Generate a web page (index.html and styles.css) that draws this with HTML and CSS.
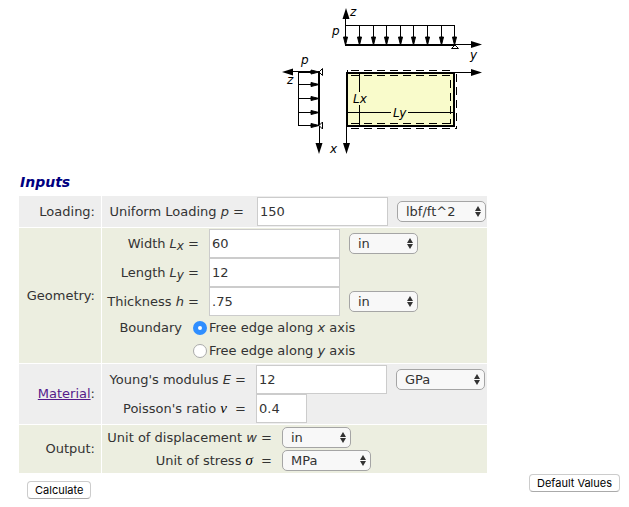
FILE: index.html
```html
<!DOCTYPE html>
<html lang="en">
<head>
<meta charset="utf-8">
<title>Plate calculator</title>
<link rel="stylesheet" href="styles.css">
</head>
<body>
<svg class="diagram" viewBox="280 0 210 164" width="210" height="164" role="img" aria-label="Plate under uniform load">
  <defs>
    <path id="axis-head" d="M0 0L-11 -3.5V3.5Z"/>
    <path id="load-head" d="M0 0L-8 -2V2Z" stroke="#000"/>
    <g id="load"><path class="line" d="M0 25V40"/><use href="#load-head" transform="translate(0 45) rotate(90)"/></g>
    <g id="side-load"><path class="line" d="M299 0H312"/><use href="#load-head" x="319"/></g>
  </defs>
  <path class="line" d="M345.500 12V45M346 25.500H455M455 44.500H474"/>
  <path class="thick" d="M345 45H455"/>
  <use href="#axis-head" transform="translate(346 8) rotate(-90)"/>
  <use href="#axis-head" x="482" y="44.500"/>
  <use href="#load" x="345.500"/><use href="#load" x="359.500"/><use href="#load" x="373.500"/>
  <use href="#load" x="386.500"/><use href="#load" x="400.500"/><use href="#load" x="413.500"/>
  <use href="#load" x="427.500"/><use href="#load" x="441.500"/><use href="#load" x="454.500"/>
  <path class="support" d="M455 45L451.500 48.500H458.500Z"/>
  <path class="line" d="M290 71.500H314M298.500 72V126M319.500 125V146"/>
  <path class="thick" d="M319 71V126"/>
  <use href="#axis-head" transform="translate(282 72) rotate(180)"/>
  <use href="#axis-head" transform="translate(319 154) rotate(90)"/>
  <use href="#side-load" y="72"/><use href="#side-load" y="84.500"/><use href="#side-load" y="98.500"/>
  <use href="#side-load" y="112.500"/><use href="#side-load" y="125.500"/>
  <path class="support" d="M319 72L322.500 68.500V75.500ZM319 125.500L322.500 122V129Z"/>
  <rect class="plate" x="347" y="73" width="107" height="53"/>
  <path class="line" d="M454 72.500H474M346.500 126V146M347.500 70V73M359.500 73V92M359.500 105V126M347 112.500H391M408 112.500H454"/>
  <path class="dash" d="M351 70.500H454M351 75.500H450M351 123.500H450M351 128.500H456M450.500 80V124M456.500 74V129"/>
  <use href="#axis-head" x="482" y="72.500"/>
  <use href="#axis-head" transform="translate(346.500 154) rotate(90)"/>
  <g class="caption">
    <text x="350" y="16">z</text><text x="332" y="35">p</text><text x="470" y="59">y</text>
    <text x="301" y="64">p</text><text x="287" y="84">z</text><text x="330" y="153">x</text>
    <text x="353" y="103">Lx</text><text x="393" y="117">Ly</text>
  </g>
</svg>

<h2 class="title">Inputs</h2>

<form class="calculator">
  <section class="group group-gray">
    <h3 class="group-name">Loading:</h3>
    <div class="fields fields-loading">
      <label class="name" for="load-value">Uniform Loading <i>p</i> =</label>
      <input class="box" id="load-value" type="text" value="150">
      <span class="pick"><select class="wide" aria-label="Loading unit"><option>lbf/ft^2</option></select></span>
    </div>
  </section>
  <section class="group group-green">
    <h3 class="group-name">Geometry:</h3>
    <div class="fields fields-geometry">
      <label class="name" for="width">Width <i>L<sub>x</sub></i> =</label>
      <input class="box" id="width" type="text" value="60">
      <span class="pick"><select aria-label="Width unit"><option>in</option></select></span>
      <label class="name" for="length">Length <i>L<sub>y</sub></i> =</label>
      <input class="box" id="length" type="text" value="12">
      <span></span>
      <label class="name" for="thickness">Thickness <i>h</i> =</label>
      <input class="box" id="thickness" type="text" value=".75">
      <span class="pick"><select aria-label="Thickness unit"><option>in</option></select></span>
      <div class="boundary" role="radiogroup" aria-labelledby="boundary-name">
        <span class="boundary-name" id="boundary-name">Boundary</span>
        <input type="radio" name="edge" id="edge-x" checked>
        <label for="edge-x">Free edge along <i>x</i> axis</label>
        <span></span>
        <input type="radio" name="edge" id="edge-y">
        <label for="edge-y">Free edge along <i>y</i> axis</label>
      </div>
    </div>
  </section>
  <section class="group group-gray">
    <h3 class="group-name"><a href="#material">Material</a>:</h3>
    <div class="fields fields-material">
      <label class="name" for="young">Young's modulus <i>E</i> =</label>
      <input class="box" id="young" type="text" value="12">
      <span class="pick"><select class="wide" aria-label="Modulus unit"><option>GPa</option></select></span>
      <label class="name" for="poisson">Poisson's ratio <i class="greek">ν</i> =</label>
      <input class="box box-short" id="poisson" type="text" value="0.4">
    </div>
  </section>
  <section class="group group-green">
    <h3 class="group-name">Output:</h3>
    <div class="fields fields-output">
      <label class="name" for="displacement">Unit of displacement <i>w</i> =</label>
      <span class="pick"><select id="displacement"><option>in</option></select></span>
      <label class="name" for="stress">Unit of stress <i class="greek">σ</i> =</label>
      <span class="pick"><select class="wide" id="stress"><option>MPa</option></select></span>
    </div>
  </section>
  <div class="actions">
    <button class="calculate" type="button">Calculate</button>
    <button type="reset">Default Values</button>
  </div>
</form>
</body>
</html>
```

FILE: styles.css
```css
* { box-sizing: border-box; }

body {
  margin: 0;
  background: #fff;
  color: #333;
  font: 13px/16px Verdana, "DejaVu Sans", sans-serif;
}

.diagram { display: block; margin-left: 280px; }
.line { fill: none; stroke: #000; stroke-width: 1; shape-rendering: crispEdges; }
.thick { fill: none; stroke: #000; stroke-width: 2; shape-rendering: crispEdges; }
.support { fill: #fff; stroke: #000; stroke-width: 1; }
.plate { fill: #f9fbcb; stroke: #000; stroke-width: 2; shape-rendering: crispEdges; }
.dash { fill: none; stroke: #000; stroke-dasharray: 8 5; shape-rendering: crispEdges; }
.caption { font: italic 12px "DejaVu Sans", sans-serif; fill: #000; }

.title {
  margin: 10px 0 6px 20px;
  color: #000080;
  font-size: 14px;
  font-style: italic;
  font-weight: bold;
  line-height: 16px;
}

.calculator { margin: 0; }

.group {
  display: grid;
  grid-template-columns: 82px 1fr;
  column-gap: 1px;
  max-width: 468px;
  margin: 0 0 1px 19px;
}
.group:nth-of-type(4) { margin-bottom: 0; }
.group-gray > * { background: #eee; }
.group-green > * { background: #eceee0; }

.group-name {
  display: flex;
  align-items: center;
  justify-content: flex-end;
  margin: 0;
  padding-right: 6px;
  font-size: 13px;
  font-weight: normal;
}
.group-name a { color: #551a8b; }

.fields { display: grid; align-items: center; padding: 1px 0; }
.fields-loading { grid-template-columns: 155px 131px 1fr; }
.fields-geometry { grid-template-columns: 107px 131px 1fr; }
.fields-material { grid-template-columns: 154px 131px 1fr; }
.fields-output { grid-template-columns: 180px 1fr; grid-auto-rows: 23px; }

.name { padding-right: 10px; text-align: right; white-space: nowrap; }
.fields-loading .name { padding-right: 13px; }
.name sub { font-size: 12px; line-height: 0; vertical-align: -2px; }
.greek { font: italic 15px/16px "Liberation Serif", serif; color: #000; margin-right: 4px; }

.box {
  width: 131px;
  height: 29px;
  margin: 0;
  padding: 0 2px;
  border: 1px solid #ccc;
  background: #fff;
  color: #333;
  font: inherit;
}
.box-short { width: 51px; }

.pick { position: relative; justify-self: start; display: flex; margin-left: 9px; }
.fields-output .pick { margin-left: 0; }
.pick::before,
.pick::after {
  content: "";
  position: absolute;
  right: 5px;
  border: 3px solid transparent;
}
.pick::before { top: 5px; border-top: 0; border-bottom: 5px solid #333; }
.pick::after { bottom: 5px; border-bottom: 0; border-top: 5px solid #333; }

select {
  appearance: none;
  width: 69px;
  height: 21px;
  padding: 0 8px;
  border: 1px solid #a5a5a5;
  border-radius: 5px;
  background: #f8f8f8;
  color: #333;
  font: inherit;
}
.wide { width: 89px; }

.boundary {
  grid-column: 1 / -1;
  display: grid;
  grid-template-columns: 91px 14px 1fr;
  grid-auto-rows: 23px;
  align-items: center;
}
.boundary-name { padding-right: 11px; text-align: right; }
.boundary label { padding-left: 2px; }

input[type="radio"] {
  appearance: none;
  width: 14px;
  height: 14px;
  margin: 0;
  border: 1px solid #aaa;
  border-radius: 50%;
  background: #fff;
}
input[type="radio"]:checked {
  border: 5px solid #2f8eff;
}

.actions {
  display: flex;
  align-items: flex-start;
  justify-content: space-between;
  padding: 1px 9px 12px 27px;
}
.calculate { margin-top: 7px; }

button {
  height: 18px;
  padding: 0 7px;
  border: 1px solid #ccc;
  border-bottom-color: #aaa;
  border-radius: 4px;
  background: #fff;
  color: #000;
  font: 11px/16px Inter, sans-serif;
}
```
